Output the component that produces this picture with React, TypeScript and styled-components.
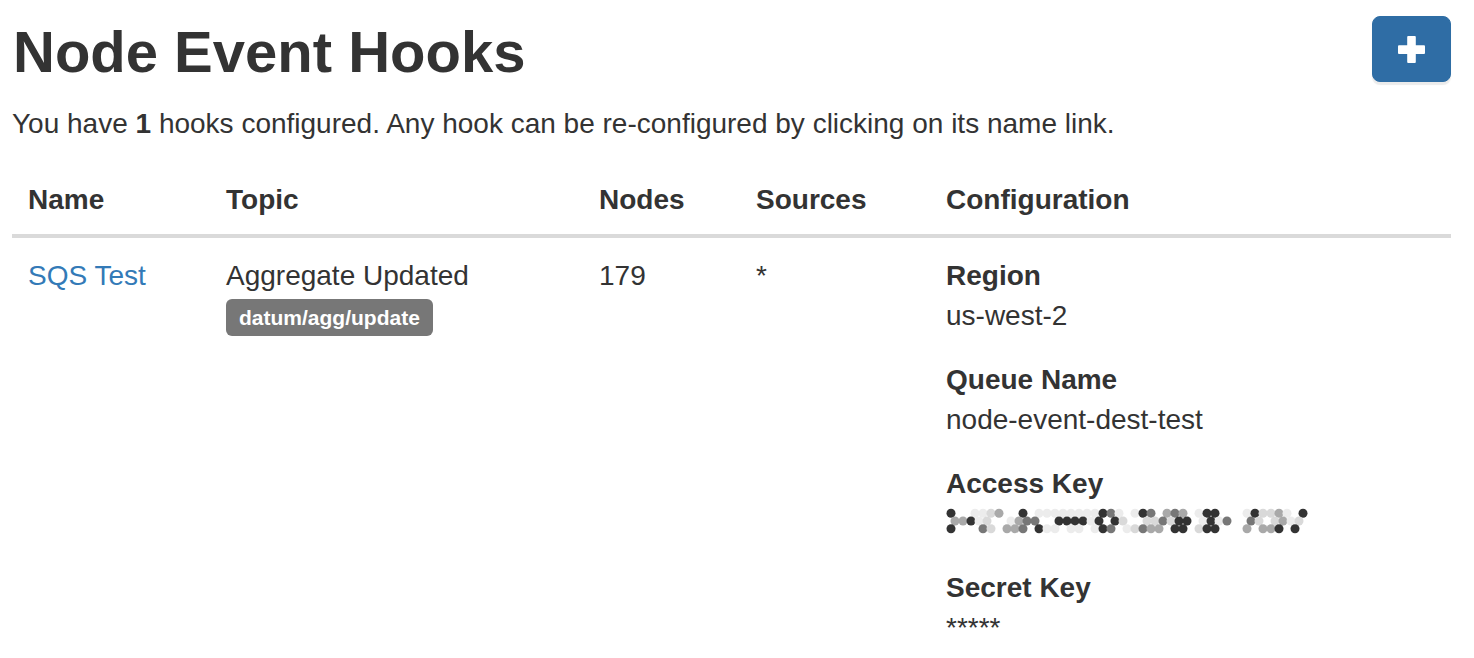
import React from "react";
import styled, { createGlobalStyle } from "styled-components";

const GlobalStyle = createGlobalStyle`
  html, body { margin: 0; padding: 0; background: #fff; }
  body {
    font-family: "Liberation Sans", Arial, Helvetica, sans-serif;
    font-size: 28px;
    line-height: 40px;
    color: #333;
  }
  * { box-sizing: border-box; }
`;

const Page = styled.div`
  padding: 0 23px 0 12px;
`;

const Header = styled.div`
  display: flex;
  justify-content: space-between;
  align-items: flex-start;
  padding-top: 16px;
`;

const Title = styled.h1`
  margin: 4px 0 0 1px;
  font-size: 58px;
  font-weight: 700;
  line-height: 1.1;
  color: #333;
`;

const AddButton = styled.button`
  width: 79px;
  height: 66px;
  border: 1px solid #2e6da4;
  border-radius: 8px;
  background: #2f6da5;
  display: flex;
  align-items: center;
  justify-content: center;
  box-shadow: 0 3px 1px rgba(0, 0, 0, 0.08);
  cursor: pointer;
  padding: 0;
`;

const Intro = styled.p`
  margin: 20px 0 20px;
`;

const Table = styled.table`
  width: 100%;
  border-collapse: collapse;
  table-layout: fixed;
`;

const HeadCell = styled.th`
  text-align: left;
  font-weight: 700;
  padding: 16px 16px 14px;
  border-bottom: 4px solid #dadada;
  vertical-align: bottom;
`;

const Cell = styled.td`
  padding: 18px 16px;
  vertical-align: top;
`;

const NameLink = styled.a`
  color: #337ab7;
  text-decoration: none;
`;

const Badge = styled.span`
  display: block;
  width: fit-content;
  margin-top: 3px;
  padding: 8px 13px;
  background: #777;
  color: #fff;
  font-size: 21px;
  font-weight: 700;
  line-height: 1;
  border-radius: 6px;
`;

const DefList = styled.dl`
  margin: 0;
`;

const Term = styled.dt`
  font-weight: 700;
`;

const Desc = styled.dd`
  margin: 0 0 24px;
`;

const MaskSvg = styled.svg`
  display: block;
  height: 40px;
`;

const rows = [
  "5001123005" + "0111111115" + "4101540343" + "0155000152" + "23105",
  "3351200134" + "4005555150" + "5200224255" + "0151400420" + "2312",
  "5000420334" + "0511011015" + "4012433055" + "0255000303" + "35050",
];
const shades: Record<string, string> = {
  "1": "#ececec",
  "2": "#d9d9d9",
  "3": "#a9a9a9",
  "4": "#777777",
  "5": "#333333",
};

const MaskedKey: React.FC = () => (
  <MaskSvg width="364" viewBox="0 0 364 40">
    {rows.map((row, r) =>
      row.split("").map((c, k) => {
        if (c === "0") return null;
        const cx = 5 + 8 * k + (r === 1 ? 4 : 0);
        const cy = 9.3 + r * 7.7;
        return <circle key={`${r}-${k}`} cx={cx} cy={cy} r={4.5} fill={shades[c]} />;
      })
    )}
  </MaskSvg>
);

const PlusIcon: React.FC = () => (
  <svg width="27" height="27" viewBox="0 0 27 27">
    <rect x="0" y="9.3" width="27" height="8.6" rx="1" fill="#fff" />
    <rect x="9.2" y="0" width="8.6" height="27" rx="1" fill="#fff" />
  </svg>
);

const config = [
  { label: "Region", value: "us-west-2" },
  { label: "Queue Name", value: "node-event-dest-test" },
  { label: "Access Key", value: null },
  { label: "Secret Key", value: "*****" },
];

export default function App() {
  return (
    <>
      <GlobalStyle />
      <Page>
        <Header>
          <Title>Node Event Hooks</Title>
          <AddButton aria-label="Add">
            <PlusIcon />
          </AddButton>
        </Header>
        <Intro>
          You have <b>1</b> hooks configured. Any hook can be re-configured by clicking on its name link.
        </Intro>
        <Table>
          <colgroup>
            <col style={{ width: 198 }} />
            <col style={{ width: 373 }} />
            <col style={{ width: 157 }} />
            <col style={{ width: 190 }} />
            <col />
          </colgroup>
          <thead>
            <tr>
              <HeadCell>Name</HeadCell>
              <HeadCell>Topic</HeadCell>
              <HeadCell>Nodes</HeadCell>
              <HeadCell>Sources</HeadCell>
              <HeadCell>Configuration</HeadCell>
            </tr>
          </thead>
          <tbody>
            <tr>
              <Cell>
                <NameLink href="#">SQS Test</NameLink>
              </Cell>
              <Cell>
                <div>Aggregate Updated</div>
                <Badge>datum/agg/update</Badge>
              </Cell>
              <Cell>179</Cell>
              <Cell>*</Cell>
              <Cell>
                <DefList>
                  {config.map((c) => (
                    <React.Fragment key={c.label}>
                      <Term>{c.label}</Term>
                      <Desc>{c.value === null ? <MaskedKey /> : c.value}</Desc>
                    </React.Fragment>
                  ))}
                </DefList>
              </Cell>
            </tr>
          </tbody>
        </Table>
      </Page>
    </>
  );
}
